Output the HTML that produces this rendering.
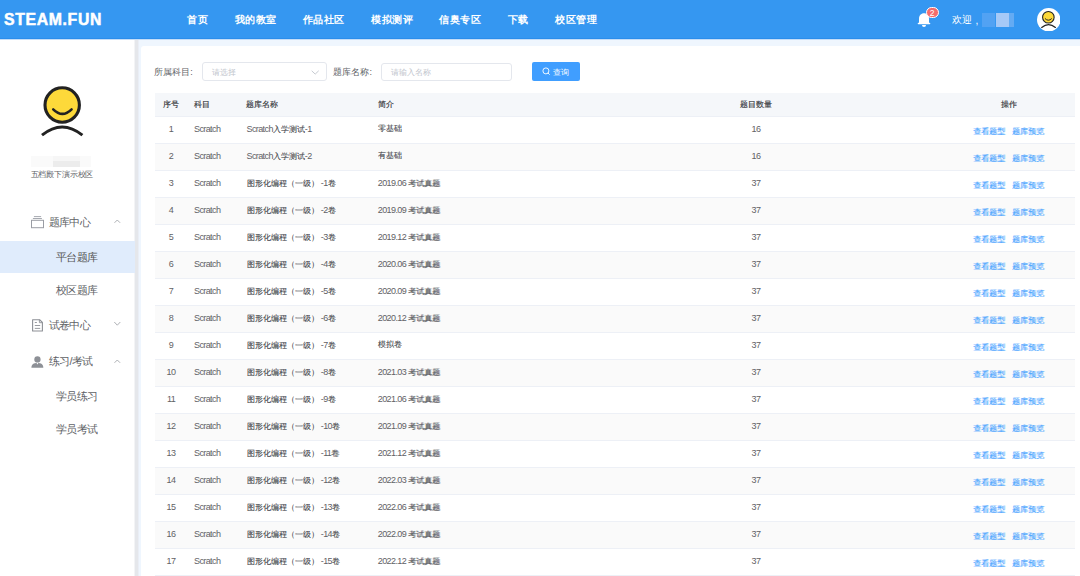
<!DOCTYPE html><html><head><meta charset="utf-8"><style>
*{margin:0;padding:0;box-sizing:border-box}
html,body{width:1080px;height:576px;overflow:hidden}
body{background:#eff6fe;font-family:"Liberation Sans",sans-serif;position:relative}
.a{position:absolute;white-space:nowrap}
#hdr{z-index:10;left:0;top:0;width:1080px;height:39px;background:#3597f1;box-shadow:inset 0 -1px 0 #2b8deb,0 1px 0 #c4ddf8}
.nav{color:#fff;font-weight:bold;font-size:10.2px;line-height:12px;top:14px;letter-spacing:0.5px}
#side{left:0;top:39px;width:135px;height:537px;background:#fff}
#card{left:141px;top:46px;width:960px;height:600px;background:#fff;border-radius:3px}
.lbl{font-size:9px;color:#606266;line-height:12px}
.box{border:1px solid #e4e7ed;border-radius:3px;background:#fff}
.ph{font-size:8px;color:#c0c4cc;line-height:10px}
.th{background:#f5f7fa;}
.tt{font-size:8px;font-weight:normal;color:#4a4c50;line-height:10px;text-shadow:0.2px 0 0 #606266}
.td{font-size:8px;color:#56585c;line-height:10px;text-shadow:0.3px 0 0 rgba(70,72,76,.6)}
.n{font-size:9px;letter-spacing:-0.6px;text-shadow:none;color:#5f6165}
.lk{font-size:8px;color:#409eff;line-height:10px;text-shadow:0.3px 0 0 rgba(64,158,255,.5)}
.mi{font-size:11px;color:#606266;line-height:12px;letter-spacing:-0.55px}
</style></head><body>
<div id="hdr" class="a">
<div class="a" style="left:4px;top:9.5px;color:#fff;font:bold 15.8px/19px 'Liberation Sans',sans-serif;letter-spacing:0.65px;-webkit-text-stroke:0.5px #fff">STEAM.FUN</div>
<div class="a nav" style="left:187.0px">首页</div>
<div class="a nav" style="left:234.5px">我的教室</div>
<div class="a nav" style="left:302.8px">作品社区</div>
<div class="a nav" style="left:371.1px">模拟测评</div>
<div class="a nav" style="left:439.1px">信奥专区</div>
<div class="a nav" style="left:507.9px">下载</div>
<div class="a nav" style="left:555.1px">校区管理</div>
<svg class="a" style="left:915px;top:10px" width="18" height="19" viewBox="0 0 18 19">
<path d="M4 13.5 V8.5 C4 5.5 6 3.2 9 3.2 C12 3.2 14 5.5 14 8.5 V13.5 Z" fill="#fff"/>
<rect x="2.7" y="12.8" width="12.6" height="1.4" rx="0.7" fill="#fff"/>
<path d="M7 15 A2 2 0 0 0 11 15 Z" fill="#fff"/>
</svg>
<div class="a" style="left:925.6px;top:6.6px;width:13.2px;height:11.5px;border-radius:6px;background:#f56c6c;border:0.8px solid #fff;color:#fff;font:8.5px/10px 'Liberation Sans',sans-serif;text-align:center">2</div>
<div class="a" style="left:951.5px;top:14.3px;color:#fff;font-size:10.3px;line-height:12px;letter-spacing:0.6px">欢迎</div>
<div class="a" style="left:975.6px;top:15.2px;color:#fff;font-size:10px;line-height:12px">,</div>
<div class="a" style="left:981.7px;top:13.4px;width:13.8px;height:13.3px;background:#52a2f3"></div>
<div class="a" style="left:995.5px;top:13.4px;width:13.3px;height:13.3px;background:#a6c9f7"></div>
<div class="a" style="left:1008.8px;top:13.4px;width:4.8px;height:13.3px;background:#64abf3"></div>
<svg class="a" style="left:1036.7px;top:7.9px" width="23.5" height="23.5" viewBox="0 0 24 24">
<circle cx="12" cy="12" r="12" fill="#fff"/>
<circle cx="11.6" cy="9.4" r="5.9" fill="#fdd93a" stroke="#222" stroke-width="1.1"/>
<path d="M8.4 11 Q11.6 14.2 14.8 11" fill="none" stroke="#222" stroke-width="1" stroke-linecap="round"/>
<path d="M4.8 19.8 Q11.8 14.2 18.8 19.8" fill="none" stroke="#222" stroke-width="1.3" stroke-linecap="round"/>
</svg>
</div>
<div id="side" class="a">
</div>
<div class="a" style="left:134px;top:39px;width:1px;height:537px;background:#f3f4f6"></div><div class="a" style="left:135px;top:39px;width:2.5px;height:537px;background:#e5e7eb"></div><div class="a" style="left:137.5px;top:39px;width:1.5px;height:537px;background:#eaeef6"></div>
<svg class="a" style="left:38px;top:84px" width="48" height="55" viewBox="38 84 48 55">
<circle cx="62.2" cy="105" r="17.2" fill="#fdd93a" stroke="#222" stroke-width="3.1"/>
<path d="M53.2 109.3 Q62.4 118.5 71.6 109.3" fill="none" stroke="#222" stroke-width="2.5" stroke-linecap="round"/>
<path d="M42 135.2 Q62.2 118.8 82.4 135.2" fill="none" stroke="#222" stroke-width="3" stroke-linecap="butt"/>
</svg>
<div class="a" style="left:31.3px;top:155.8px;width:60px;height:11px;background:#fafafa"></div>
<div class="a" style="left:52.9px;top:160.8px;width:26.7px;height:5.9px;background:#ececec"></div>
<div class="a" style="left:52.9px;top:155.8px;width:26.7px;height:5px;background:#f6f6f6"></div>
<div class="a" style="left:30.5px;top:169px;font-size:8px;line-height:11px;color:#606266;letter-spacing:-0.15px">五档殿下演示校区</div>
<div class="a" style="left:0;top:240.5px;width:135px;height:32.5px;background:#e0ecfc"></div>
<svg class="a" style="left:30px;top:215px" width="16" height="15" viewBox="0 0 16 15">
<rect x="1.5" y="5.3" width="12" height="7.4" fill="none" stroke="#9a9da4" stroke-width="1"/>
<line x1="3.9" y1="1.6" x2="11.1" y2="1.6" stroke="#a6a9b0" stroke-width="1"/>
<line x1="2.9" y1="3.5" x2="11.9" y2="3.5" stroke="#a6a9b0" stroke-width="1"/>
</svg>
<div class="a mi" style="left:48.5px;top:215.5px">题库中心</div>
<div class="a mi" style="left:56px;top:250.5px;color:#555">平台题库</div>
<div class="a mi" style="left:56px;top:283.5px">校区题库</div>
<svg class="a" style="left:31px;top:318px" width="13" height="15" viewBox="0 0 13 15">
<path d="M1.6 1.7 H8.6 L11.4 4.5 V13.05 H1.6 Z" fill="none" stroke="#8d9096" stroke-width="1.1" stroke-linejoin="round"/>
<path d="M8.4 1.8 V4.7 H11.3" fill="none" stroke="#8d9096" stroke-width="0.9"/>
<line x1="3.8" y1="4.5" x2="5.9" y2="4.5" stroke="#8d9096" stroke-width="0.9"/>
<line x1="3.8" y1="7.5" x2="9.2" y2="7.5" stroke="#8d9096" stroke-width="0.9"/>
<line x1="3.8" y1="10.4" x2="9.2" y2="10.4" stroke="#8d9096" stroke-width="0.9"/>
</svg>
<div class="a mi" style="left:48.5px;top:318.5px">试卷中心</div>
<svg class="a" style="left:31px;top:355px" width="13" height="14" viewBox="0 0 13 14">
<circle cx="6.45" cy="4.4" r="3.15" fill="#8d9096"/>
<path d="M0.4 12.7 C0.5 9.2 2.6 7.9 6.45 7.9 C10.3 7.9 12.2 9.2 12.3 12.7 Z" fill="#8d9096"/>
<path d="M5.5 7.9 L6.45 9.4 L7.4 7.9 Z" fill="#fff"/>
</svg>
<div class="a mi" style="left:48.5px;top:355.3px">练习/考试</div>
<div class="a mi" style="left:56px;top:389.5px">学员练习</div>
<div class="a mi" style="left:56px;top:422.5px">学员考试</div>
<svg class="a" style="left:114.1px;top:219.1px" width="7" height="5" viewBox="0 0 7 5"><path d="M0.5 3.8 L3.3 1 L6.1 3.8" fill="none" stroke="#a4a7ad" stroke-width="0.9"/></svg>
<svg class="a" style="left:114.1px;top:321.1px" width="7" height="5" viewBox="0 0 7 5"><path d="M0.3 1 L3.3 4.2 L6.3 1" fill="none" stroke="#a4a7ad" stroke-width="0.9"/></svg>
<svg class="a" style="left:114.1px;top:358.5px" width="7" height="5" viewBox="0 0 7 5"><path d="M0.5 3.8 L3.3 1 L6.1 3.8" fill="none" stroke="#a4a7ad" stroke-width="0.9"/></svg>
<div id="card" class="a"></div>
<div class="a lbl" style="left:154.3px;top:65.5px">所属科目:</div>
<div class="a box" style="left:202px;top:62.4px;width:125.2px;height:18.4px"></div>
<div class="a ph" style="left:212px;top:68px">请选择</div>
<svg class="a" style="left:311px;top:70px" width="8.5" height="5" viewBox="0 0 8.5 5"><path d="M0.7 0.8 L4.2 4.1 L7.7 0.8" fill="none" stroke="#c0c4cc" stroke-width="0.9"/></svg>
<div class="a lbl" style="left:333.4px;top:65.5px">题库名称:</div>
<div class="a box" style="left:380.8px;top:62.6px;width:130.8px;height:18.4px"></div>
<div class="a ph" style="left:391.2px;top:68px">请输入名称</div>
<div class="a" style="left:532px;top:62.4px;width:47.7px;height:18.9px;background:#409eff;border-radius:2px"></div>
<svg class="a" style="left:542.3px;top:66.8px" width="9" height="9" viewBox="0 0 9 9"><circle cx="3.9" cy="3.9" r="3" fill="none" stroke="#fff" stroke-width="0.9"/><line x1="6.1" y1="6.1" x2="7.4" y2="7.4" stroke="#fff" stroke-width="0.9" stroke-linecap="round"/></svg>
<div class="a" style="left:553px;top:68px;font-size:8px;line-height:10px;color:#fff;letter-spacing:0.3px">查询</div>
<div class="a th" style="left:154.5px;top:93px;width:920.5px;height:23.5px;border-bottom:1px solid #edf0f6"></div>
<div class="a tt" style="left:162.8px;top:99.5px">序号</div>
<div class="a tt" style="left:194.3px;top:99.5px">科目</div>
<div class="a tt" style="left:246.3px;top:99.5px">题库名称</div>
<div class="a tt" style="left:377.5px;top:99.5px">简介</div>
<div class="a tt" style="left:740px;top:99.5px">题目数量</div>
<div class="a tt" style="left:1001px;top:99.5px">操作</div>
<div class="a" style="left:154.5px;top:116.5px;width:920.5px;height:27px;background:#fff;border-bottom:1px solid #edf0f6"></div>
<div class="a td" style="left:154.5px;width:33px;text-align:center;top:123.5px"><span class="n">1</span></div>
<div class="a td" style="left:194px;top:123.5px"><span class="n">Scratch</span></div>
<div class="a td" style="left:246.5px;top:123.5px"><span class="n">Scratch</span>入学测试<span class="n">-1</span></div>
<div class="a td" style="left:377.8px;top:123.5px">零基础</div>
<div class="a td" style="left:706px;width:100px;text-align:center;top:123.5px"><span class="n">16</span></div>
<div class="a lk" style="left:973.3px;top:126.5px">查看题型</div>
<div class="a lk" style="left:1012.3px;top:126.5px">题库预览</div>
<div class="a" style="left:154.5px;top:143.5px;width:920.5px;height:27px;background:#fafafa;border-bottom:1px solid #edf0f6"></div>
<div class="a td" style="left:154.5px;width:33px;text-align:center;top:150.5px"><span class="n">2</span></div>
<div class="a td" style="left:194px;top:150.5px"><span class="n">Scratch</span></div>
<div class="a td" style="left:246.5px;top:150.5px"><span class="n">Scratch</span>入学测试<span class="n">-2</span></div>
<div class="a td" style="left:377.8px;top:150.5px">有基础</div>
<div class="a td" style="left:706px;width:100px;text-align:center;top:150.5px"><span class="n">16</span></div>
<div class="a lk" style="left:973.3px;top:153.5px">查看题型</div>
<div class="a lk" style="left:1012.3px;top:153.5px">题库预览</div>
<div class="a" style="left:154.5px;top:170.5px;width:920.5px;height:27px;background:#fff;border-bottom:1px solid #edf0f6"></div>
<div class="a td" style="left:154.5px;width:33px;text-align:center;top:177.5px"><span class="n">3</span></div>
<div class="a td" style="left:194px;top:177.5px"><span class="n">Scratch</span></div>
<div class="a td" style="left:246.5px;top:177.5px">图形化编程（一级） <span class="n">-1</span>卷</div>
<div class="a td" style="left:377.8px;top:177.5px"><span class="n">2019.06</span> 考试真题</div>
<div class="a td" style="left:706px;width:100px;text-align:center;top:177.5px"><span class="n">37</span></div>
<div class="a lk" style="left:973.3px;top:180.5px">查看题型</div>
<div class="a lk" style="left:1012.3px;top:180.5px">题库预览</div>
<div class="a" style="left:154.5px;top:197.5px;width:920.5px;height:27px;background:#fafafa;border-bottom:1px solid #edf0f6"></div>
<div class="a td" style="left:154.5px;width:33px;text-align:center;top:204.5px"><span class="n">4</span></div>
<div class="a td" style="left:194px;top:204.5px"><span class="n">Scratch</span></div>
<div class="a td" style="left:246.5px;top:204.5px">图形化编程（一级） <span class="n">-2</span>卷</div>
<div class="a td" style="left:377.8px;top:204.5px"><span class="n">2019.09</span> 考试真题</div>
<div class="a td" style="left:706px;width:100px;text-align:center;top:204.5px"><span class="n">37</span></div>
<div class="a lk" style="left:973.3px;top:207.5px">查看题型</div>
<div class="a lk" style="left:1012.3px;top:207.5px">题库预览</div>
<div class="a" style="left:154.5px;top:224.5px;width:920.5px;height:27px;background:#fff;border-bottom:1px solid #edf0f6"></div>
<div class="a td" style="left:154.5px;width:33px;text-align:center;top:231.5px"><span class="n">5</span></div>
<div class="a td" style="left:194px;top:231.5px"><span class="n">Scratch</span></div>
<div class="a td" style="left:246.5px;top:231.5px">图形化编程（一级） <span class="n">-3</span>卷</div>
<div class="a td" style="left:377.8px;top:231.5px"><span class="n">2019.12</span> 考试真题</div>
<div class="a td" style="left:706px;width:100px;text-align:center;top:231.5px"><span class="n">37</span></div>
<div class="a lk" style="left:973.3px;top:234.5px">查看题型</div>
<div class="a lk" style="left:1012.3px;top:234.5px">题库预览</div>
<div class="a" style="left:154.5px;top:251.5px;width:920.5px;height:27px;background:#fafafa;border-bottom:1px solid #edf0f6"></div>
<div class="a td" style="left:154.5px;width:33px;text-align:center;top:258.5px"><span class="n">6</span></div>
<div class="a td" style="left:194px;top:258.5px"><span class="n">Scratch</span></div>
<div class="a td" style="left:246.5px;top:258.5px">图形化编程（一级） <span class="n">-4</span>卷</div>
<div class="a td" style="left:377.8px;top:258.5px"><span class="n">2020.06</span> 考试真题</div>
<div class="a td" style="left:706px;width:100px;text-align:center;top:258.5px"><span class="n">37</span></div>
<div class="a lk" style="left:973.3px;top:261.5px">查看题型</div>
<div class="a lk" style="left:1012.3px;top:261.5px">题库预览</div>
<div class="a" style="left:154.5px;top:278.5px;width:920.5px;height:27px;background:#fff;border-bottom:1px solid #edf0f6"></div>
<div class="a td" style="left:154.5px;width:33px;text-align:center;top:285.5px"><span class="n">7</span></div>
<div class="a td" style="left:194px;top:285.5px"><span class="n">Scratch</span></div>
<div class="a td" style="left:246.5px;top:285.5px">图形化编程（一级） <span class="n">-5</span>卷</div>
<div class="a td" style="left:377.8px;top:285.5px"><span class="n">2020.09</span> 考试真题</div>
<div class="a td" style="left:706px;width:100px;text-align:center;top:285.5px"><span class="n">37</span></div>
<div class="a lk" style="left:973.3px;top:288.5px">查看题型</div>
<div class="a lk" style="left:1012.3px;top:288.5px">题库预览</div>
<div class="a" style="left:154.5px;top:305.5px;width:920.5px;height:27px;background:#fafafa;border-bottom:1px solid #edf0f6"></div>
<div class="a td" style="left:154.5px;width:33px;text-align:center;top:312.5px"><span class="n">8</span></div>
<div class="a td" style="left:194px;top:312.5px"><span class="n">Scratch</span></div>
<div class="a td" style="left:246.5px;top:312.5px">图形化编程（一级） <span class="n">-6</span>卷</div>
<div class="a td" style="left:377.8px;top:312.5px"><span class="n">2020.12</span> 考试真题</div>
<div class="a td" style="left:706px;width:100px;text-align:center;top:312.5px"><span class="n">37</span></div>
<div class="a lk" style="left:973.3px;top:315.5px">查看题型</div>
<div class="a lk" style="left:1012.3px;top:315.5px">题库预览</div>
<div class="a" style="left:154.5px;top:332.5px;width:920.5px;height:27px;background:#fff;border-bottom:1px solid #edf0f6"></div>
<div class="a td" style="left:154.5px;width:33px;text-align:center;top:339.5px"><span class="n">9</span></div>
<div class="a td" style="left:194px;top:339.5px"><span class="n">Scratch</span></div>
<div class="a td" style="left:246.5px;top:339.5px">图形化编程（一级） <span class="n">-7</span>卷</div>
<div class="a td" style="left:377.8px;top:339.5px">模拟卷</div>
<div class="a td" style="left:706px;width:100px;text-align:center;top:339.5px"><span class="n">37</span></div>
<div class="a lk" style="left:973.3px;top:342.5px">查看题型</div>
<div class="a lk" style="left:1012.3px;top:342.5px">题库预览</div>
<div class="a" style="left:154.5px;top:359.5px;width:920.5px;height:27px;background:#fafafa;border-bottom:1px solid #edf0f6"></div>
<div class="a td" style="left:154.5px;width:33px;text-align:center;top:366.5px"><span class="n">10</span></div>
<div class="a td" style="left:194px;top:366.5px"><span class="n">Scratch</span></div>
<div class="a td" style="left:246.5px;top:366.5px">图形化编程（一级） <span class="n">-8</span>卷</div>
<div class="a td" style="left:377.8px;top:366.5px"><span class="n">2021.03</span> 考试真题</div>
<div class="a td" style="left:706px;width:100px;text-align:center;top:366.5px"><span class="n">37</span></div>
<div class="a lk" style="left:973.3px;top:369.5px">查看题型</div>
<div class="a lk" style="left:1012.3px;top:369.5px">题库预览</div>
<div class="a" style="left:154.5px;top:386.5px;width:920.5px;height:27px;background:#fff;border-bottom:1px solid #edf0f6"></div>
<div class="a td" style="left:154.5px;width:33px;text-align:center;top:393.5px"><span class="n">11</span></div>
<div class="a td" style="left:194px;top:393.5px"><span class="n">Scratch</span></div>
<div class="a td" style="left:246.5px;top:393.5px">图形化编程（一级） <span class="n">-9</span>卷</div>
<div class="a td" style="left:377.8px;top:393.5px"><span class="n">2021.06</span> 考试真题</div>
<div class="a td" style="left:706px;width:100px;text-align:center;top:393.5px"><span class="n">37</span></div>
<div class="a lk" style="left:973.3px;top:396.5px">查看题型</div>
<div class="a lk" style="left:1012.3px;top:396.5px">题库预览</div>
<div class="a" style="left:154.5px;top:413.5px;width:920.5px;height:27px;background:#fafafa;border-bottom:1px solid #edf0f6"></div>
<div class="a td" style="left:154.5px;width:33px;text-align:center;top:420.5px"><span class="n">12</span></div>
<div class="a td" style="left:194px;top:420.5px"><span class="n">Scratch</span></div>
<div class="a td" style="left:246.5px;top:420.5px">图形化编程（一级） <span class="n">-10</span>卷</div>
<div class="a td" style="left:377.8px;top:420.5px"><span class="n">2021.09</span> 考试真题</div>
<div class="a td" style="left:706px;width:100px;text-align:center;top:420.5px"><span class="n">37</span></div>
<div class="a lk" style="left:973.3px;top:423.5px">查看题型</div>
<div class="a lk" style="left:1012.3px;top:423.5px">题库预览</div>
<div class="a" style="left:154.5px;top:440.5px;width:920.5px;height:27px;background:#fff;border-bottom:1px solid #edf0f6"></div>
<div class="a td" style="left:154.5px;width:33px;text-align:center;top:447.5px"><span class="n">13</span></div>
<div class="a td" style="left:194px;top:447.5px"><span class="n">Scratch</span></div>
<div class="a td" style="left:246.5px;top:447.5px">图形化编程（一级） <span class="n">-11</span>卷</div>
<div class="a td" style="left:377.8px;top:447.5px"><span class="n">2021.12</span> 考试真题</div>
<div class="a td" style="left:706px;width:100px;text-align:center;top:447.5px"><span class="n">37</span></div>
<div class="a lk" style="left:973.3px;top:450.5px">查看题型</div>
<div class="a lk" style="left:1012.3px;top:450.5px">题库预览</div>
<div class="a" style="left:154.5px;top:467.5px;width:920.5px;height:27px;background:#fafafa;border-bottom:1px solid #edf0f6"></div>
<div class="a td" style="left:154.5px;width:33px;text-align:center;top:474.5px"><span class="n">14</span></div>
<div class="a td" style="left:194px;top:474.5px"><span class="n">Scratch</span></div>
<div class="a td" style="left:246.5px;top:474.5px">图形化编程（一级） <span class="n">-12</span>卷</div>
<div class="a td" style="left:377.8px;top:474.5px"><span class="n">2022.03</span> 考试真题</div>
<div class="a td" style="left:706px;width:100px;text-align:center;top:474.5px"><span class="n">37</span></div>
<div class="a lk" style="left:973.3px;top:477.5px">查看题型</div>
<div class="a lk" style="left:1012.3px;top:477.5px">题库预览</div>
<div class="a" style="left:154.5px;top:494.5px;width:920.5px;height:27px;background:#fff;border-bottom:1px solid #edf0f6"></div>
<div class="a td" style="left:154.5px;width:33px;text-align:center;top:501.5px"><span class="n">15</span></div>
<div class="a td" style="left:194px;top:501.5px"><span class="n">Scratch</span></div>
<div class="a td" style="left:246.5px;top:501.5px">图形化编程（一级） <span class="n">-13</span>卷</div>
<div class="a td" style="left:377.8px;top:501.5px"><span class="n">2022.06</span> 考试真题</div>
<div class="a td" style="left:706px;width:100px;text-align:center;top:501.5px"><span class="n">37</span></div>
<div class="a lk" style="left:973.3px;top:504.5px">查看题型</div>
<div class="a lk" style="left:1012.3px;top:504.5px">题库预览</div>
<div class="a" style="left:154.5px;top:521.5px;width:920.5px;height:27px;background:#fafafa;border-bottom:1px solid #edf0f6"></div>
<div class="a td" style="left:154.5px;width:33px;text-align:center;top:528.5px"><span class="n">16</span></div>
<div class="a td" style="left:194px;top:528.5px"><span class="n">Scratch</span></div>
<div class="a td" style="left:246.5px;top:528.5px">图形化编程（一级） <span class="n">-14</span>卷</div>
<div class="a td" style="left:377.8px;top:528.5px"><span class="n">2022.09</span> 考试真题</div>
<div class="a td" style="left:706px;width:100px;text-align:center;top:528.5px"><span class="n">37</span></div>
<div class="a lk" style="left:973.3px;top:531.5px">查看题型</div>
<div class="a lk" style="left:1012.3px;top:531.5px">题库预览</div>
<div class="a" style="left:154.5px;top:548.5px;width:920.5px;height:27px;background:#fff;border-bottom:1px solid #edf0f6"></div>
<div class="a td" style="left:154.5px;width:33px;text-align:center;top:555.5px"><span class="n">17</span></div>
<div class="a td" style="left:194px;top:555.5px"><span class="n">Scratch</span></div>
<div class="a td" style="left:246.5px;top:555.5px">图形化编程（一级） <span class="n">-15</span>卷</div>
<div class="a td" style="left:377.8px;top:555.5px"><span class="n">2022.12</span> 考试真题</div>
<div class="a td" style="left:706px;width:100px;text-align:center;top:555.5px"><span class="n">37</span></div>
<div class="a lk" style="left:973.3px;top:558.5px">查看题型</div>
<div class="a lk" style="left:1012.3px;top:558.5px">题库预览</div>
<div class="a" style="left:154.5px;top:575.5px;width:920.5px;height:27px;background:#fafafa;border-bottom:1px solid #edf0f6"></div>
<div class="a td" style="left:154.5px;width:33px;text-align:center;top:582.5px"><span class="n">18</span></div>
<div class="a td" style="left:194px;top:582.5px"><span class="n">Scratch</span></div>
<div class="a td" style="left:246.5px;top:582.5px">图形化编程（一级） <span class="n">-16</span>卷</div>
<div class="a td" style="left:377.8px;top:582.5px"><span class="n">2023.03</span> 考试真题</div>
<div class="a td" style="left:706px;width:100px;text-align:center;top:582.5px"><span class="n">37</span></div>
<div class="a lk" style="left:973.3px;top:585.5px">查看题型</div>
<div class="a lk" style="left:1012.3px;top:585.5px">题库预览</div>
</body></html>
